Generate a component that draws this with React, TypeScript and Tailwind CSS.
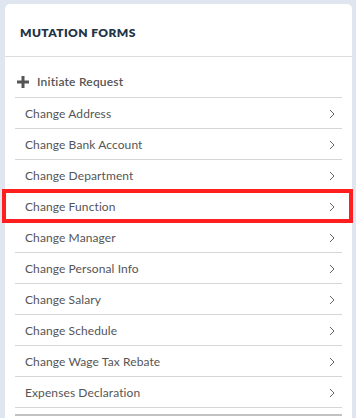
const forms = [
  "Change Address",
  "Change Bank Account",
  "Change Department",
  "Change Function",
  "Change Manager",
  "Change Personal Info",
  "Change Salary",
  "Change Schedule",
  "Change Wage Tax Rebate",
  "Expenses Declaration",
];

function Chevron() {
  return (
    <svg width="6" height="10" viewBox="0 0 6 10" className="text-[#666]">
      <path d="M1 1L5 5L1 9" fill="none" stroke="currentColor" strokeWidth="1" />
    </svg>
  );
}

export default function App() {
  return (
    <div
      className="relative h-[418px] w-[356px] overflow-hidden bg-[#dfe6ef] pl-[5px] pr-[4px] pt-[4px]"
      style={{ fontFamily: "Lato, 'Open Sans', sans-serif" }}
    >
      <div className="h-[430px] rounded-[5px] bg-white">
        <div className="flex h-[53px] items-center border-b border-[#dcdcdc] px-[15px] pt-[6px]">
          <h2 className="text-[12px] font-extrabold uppercase leading-none tracking-[0.4px] text-[#1f3447]">
            Mutation Forms
          </h2>
        </div>
        <div className="px-[10px]">
          <div className="flex h-[41px] items-center gap-[8px] border-b border-[#d6d6d6] pl-[2px] pt-[9px] text-[12px] font-semibold text-[#555]">
            <svg width="12" height="12" viewBox="0 0 12 12" className="text-[#555]">
              <path d="M4.5 0h3v4.5H12v3H7.5V12h-3V7.5H0v-3h4.5z" fill="currentColor" />
            </svg>
            <span className="tracking-[0.2px]">Initiate Request</span>
          </div>
          {forms.map((f) => (
            <div
              key={f}
              className="flex h-[31px] items-center justify-between border-b border-[#d6d6d6] pl-[10px] pr-[7px] pt-[2px] text-[12px] text-[#555] last:border-b-0"
            >
              <span className="tracking-[0.1px]">{f}</span>
              <Chevron />
            </div>
          ))}
          <div className="mt-[6px] h-[2px] bg-[#c2c2c2]" />
        </div>
      </div>
      <div className="absolute left-[2px] top-[189px] h-[34px] w-[351px] border-[4px] border-[#ff1f1f]" />
    </div>
  );
}
